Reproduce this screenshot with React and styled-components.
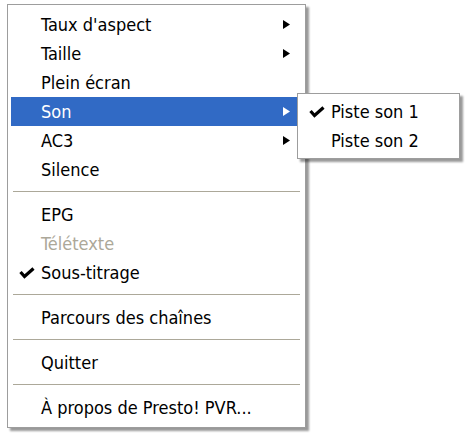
import React from "react";
import styled, {createGlobalStyle} from "styled-components";

const GlobalStyle = createGlobalStyle`
 html, body {
  margin: 0;
  padding: 0;
  background: #ffffff;
 }
 body {
  font-family: "DejaVu Sans Condensed", "DejaVu Sans", sans-serif;
 }
`;

const Screen = styled.div`
 padding: 4px 0 0 7px;
 width: 465px;
 height: 434px;
 box-sizing: border-box;
`;

const MenuBox = styled.ul`
 position: ${({$sub}) => ($sub ? "absolute" : "relative")};
 top: ${({$sub}) => ($sub ? "-4px" : "auto")};
 left: ${({$sub}) => ($sub ? "286px" : "auto")};
 z-index: ${({$sub}) => ($sub ? 2 : 1)};
 width: ${({$w}) => $w}px;
 margin: 0;
 padding: ${({$sub}) => ($sub ? "3px 3px" : "5px 3px")};
 list-style: none;
 box-sizing: border-box;
 background: #ffffff;
 border: 1px solid #9d9d9d;
 box-shadow: 3px 3px 2px rgba(0, 0, 0, 0.4);
`;

const Item = styled.li`
 position: relative;
 display: flex;
 align-items: center;
 height: 29px;
 padding: 0 12px 0 30px;
 font-size: 18px;
 color: ${({$active, $disabled}) =>
  $active ? "#ffffff" : $disabled ? "#aca899" : "#000000"};
 background: ${({$active}) => ($active ? "#316ac5" : "transparent")};
 white-space: nowrap;
`;

const Label = styled.span`
 flex: 1;
`;

const CheckMark = styled.svg`
 position: absolute;
 left: 8px;
 top: 9px;
`;

const Arrow = styled.svg`
 display: block;
`;

const Separator = styled.li`
 height: 2px;
 margin: 7px 2px;
 border-top: 1px solid #aca899;
 border-bottom: 1px solid #ffffff;
 box-sizing: border-box;
`;

const Check = ({color}) => (
 <CheckMark width="16" height="12" viewBox="0 0 16 12">
  <path d="M1.5 5 L5.5 9.5 L14.5 1.5" fill="none" stroke={color} strokeWidth="3.2" />
 </CheckMark>
);

const SubArrow = ({color}) => (
 <Arrow width="7" height="9" viewBox="0 0 7 9">
  <polygon points="0,0 7,4.5 0,9" fill={color} />
 </Arrow>
);

const soundTracks = [
 {label: "Piste son 1", checked: true},
 {label: "Piste son 2"},
];

const entries = [
 {label: "Taux d'aspect", arrow: true},
 {label: "Taille", arrow: true},
 {label: "Plein écran"},
 {label: "Son", arrow: true, active: true, sub: soundTracks},
 {label: "AC3", arrow: true},
 {label: "Silence"},
 {sep: true},
 {label: "EPG"},
 {label: "Télétexte", disabled: true},
 {label: "Sous-titrage", checked: true},
 {sep: true},
 {label: "Parcours des chaînes"},
 {sep: true},
 {label: "Quitter"},
 {sep: true},
 {label: "À propos de Presto! PVR..."},
];

const MenuItem = ({item}) => {
 const ink = item.active ? "#ffffff" : "#000000";
 return (
  <Item $active={item.active} $disabled={item.disabled}>
   {item.checked && <Check color={ink} />}
   <Label>{item.label}</Label>
   {item.arrow && <SubArrow color={ink} />}
   {item.sub && (
    <MenuBox $sub $w={163}>
     {item.sub.map((s, i) => (
      <MenuItem key={i} item={s} />
     ))}
    </MenuBox>
   )}
  </Item>
 );
};

const App = () => {
 return (
  <Screen>
   <GlobalStyle />
   <MenuBox $w={299}>
    {entries.map((item, index) =>
     item.sep ? <Separator key={index} /> : <MenuItem key={index} item={item} />
    )}
   </MenuBox>
  </Screen>
 );
};

export default App;
